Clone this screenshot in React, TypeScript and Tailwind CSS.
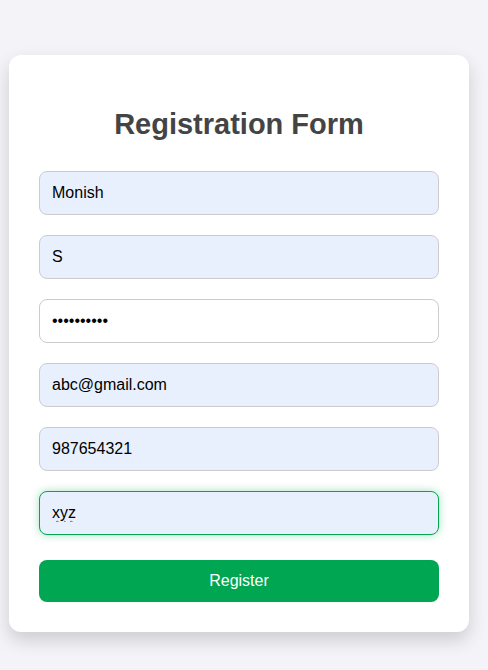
import { useState } from "react";

const inputCls =
  "h-[44px] w-full rounded-lg border border-[#cccccc] px-3 text-[16px] text-black outline-none";

export default function App() {
  const [first, setFirst] = useState("Monish");
  const [last, setLast] = useState("S");
  const [pw, setPw] = useState("abcdefghij");
  const [email, setEmail] = useState("abc@gmail.com");
  const [phone, setPhone] = useState("987654321");
  const [city, setCity] = useState("xyz");

  return (
    <div className="min-h-[670px] bg-[#f3f3f8] pt-[55px] font-['Liberation_Sans',Arial,sans-serif]">
      <form
        onSubmit={(e) => e.preventDefault()}
        className="ml-[9px] flex w-[460px] flex-col rounded-xl bg-white px-[30px] pb-[30px] pt-[52px] shadow-[0_8px_18px_rgba(0,0,0,0.16)]"
      >
        <h2 className="mb-[30px] text-center text-[29px] font-bold leading-[34px] text-[#444444]">
          Registration Form
        </h2>
        <div className="flex flex-col gap-5">
          <input className={inputCls + " bg-[#e8f0fe]"} value={first} onChange={(e) => setFirst(e.target.value)} />
          <input className={inputCls + " bg-[#e8f0fe]"} value={last} onChange={(e) => setLast(e.target.value)} />
          <input type="password" className={inputCls + " bg-white"} value={pw} onChange={(e) => setPw(e.target.value)} />
          <input className={inputCls + " bg-[#e8f0fe]"} value={email} onChange={(e) => setEmail(e.target.value)} />
          <input className={inputCls + " bg-[#e8f0fe]"} value={phone} onChange={(e) => setPhone(e.target.value)} />
          <input
            className="h-[44px] w-full rounded-lg border border-[#00a651] bg-[#e8f0fe] px-3 text-[16px] text-black underline decoration-[#e33] decoration-wavy decoration-1 underline-offset-2 shadow-[0_0_8px_rgba(0,166,81,0.35)] outline-none"
            value={city}
            onChange={(e) => setCity(e.target.value)}
          />
        </div>
        <button
          type="submit"
          className="mt-[25px] h-[42px] w-full rounded-lg bg-[#00a651] text-[16px] text-white"
        >
          Register
        </button>
      </form>
    </div>
  );
}
